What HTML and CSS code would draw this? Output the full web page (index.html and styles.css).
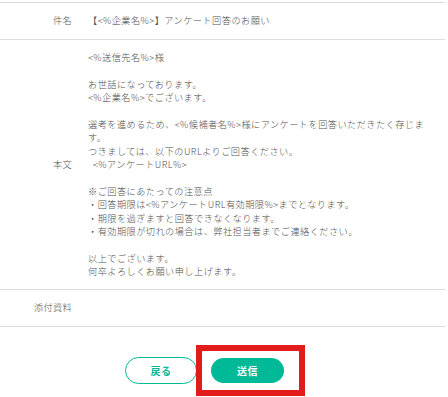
FILE: index.html
```html
<!DOCTYPE html>
<html lang="ja">
<head>
    <meta charset="UTF-8">
    <meta name="viewport" content="width=device-width, initial-scale=1.0">
    <title>メール送信確認</title>
    <link rel="stylesheet" href="styles.css">
</head>
<body>
    <div class="confirm">
        <div class="row">
            <div class="label">件名</div>
            <div class="value">【&lt;%企業名%&gt;】アンケート回答のお願い</div>
        </div>
        <div class="row">
            <div class="label">本文</div>
            <div class="value mail-body">
                <p>&lt;%送信先名%&gt;様</p>
                <p>お世話になっております。<br>&lt;%企業名%&gt;でございます。</p>
                <p>選考を進めるため、&lt;%候補者名%&gt;様にアンケートを回答いただきたく存じます。<br>つきましては、以下のURLよりご回答ください。<br>&nbsp;&nbsp;&lt;%アンケートURL%&gt;</p>
                <p>※ご回答にあたっての注意点<br>・回答期限は&lt;%アンケートURL有効期限%&gt;までとなります。<br>・期限を過ぎますと回答できなくなります。<br>・有効期限が切れの場合は、弊社担当者までご連絡ください。</p>
                <p>以上でございます。<br>何卒よろしくお願い申し上げます。</p>
            </div>
        </div>
        <div class="row">
            <div class="label">添付資料</div>
            <div class="value"></div>
        </div>
    </div>

    <div class="actions">
        <button class="btn btn-back">戻る</button>
        <div class="highlight">
            <button class="btn btn-send">送信</button>
        </div>
    </div>
</body>
</html>
```

FILE: styles.css
```css
* { margin: 0; padding: 0; box-sizing: border-box; }
body {
    font-family: "Noto Sans CJK JP", "Noto Sans", sans-serif;
    font-size: 9.2px;
    font-weight: 300;
    letter-spacing: 0.45px;
    line-height: 13.4px;
    color: #505050;
    background: #fff;
    padding-top: 2px;
}
.confirm { width: 445px; border-top: 1px solid #ddd; }
.row {
    display: grid;
    grid-template-columns: 72px 1fr;
    column-gap: 16px;
    align-items: center;
    min-height: 37px;
    border-bottom: 1px solid #ddd;
}
.label { text-align: right; color: #555; letter-spacing: 0.3px; }
.value { padding-right: 20px; }
.mail-body { padding: 11px 20px 10px 0; }
.mail-body p + p { margin-top: 13.4px; }

.actions {
    display: flex;
    align-items: center;
    padding-left: 125px;
    margin-top: 18px;
}
.btn {
    font-family: inherit;
    font-size: 10px;
    font-weight: bold;
    letter-spacing: 0.5px;
    border-radius: 14px;
    cursor: pointer;
}
.btn-back {
    width: 72px;
    height: 27px;
    background: #fff;
    color: #00b996;
    border: 1px solid #00b996;
}
.highlight {
    margin-left: -1px;
    border: 6px solid #e21b1b;
    padding: 7px 15px 7px 9px;
}
.btn-send {
    display: block;
    width: 73px;
    height: 25px;
    background: #00b996;
    color: #fff;
    border: none;
}
```
